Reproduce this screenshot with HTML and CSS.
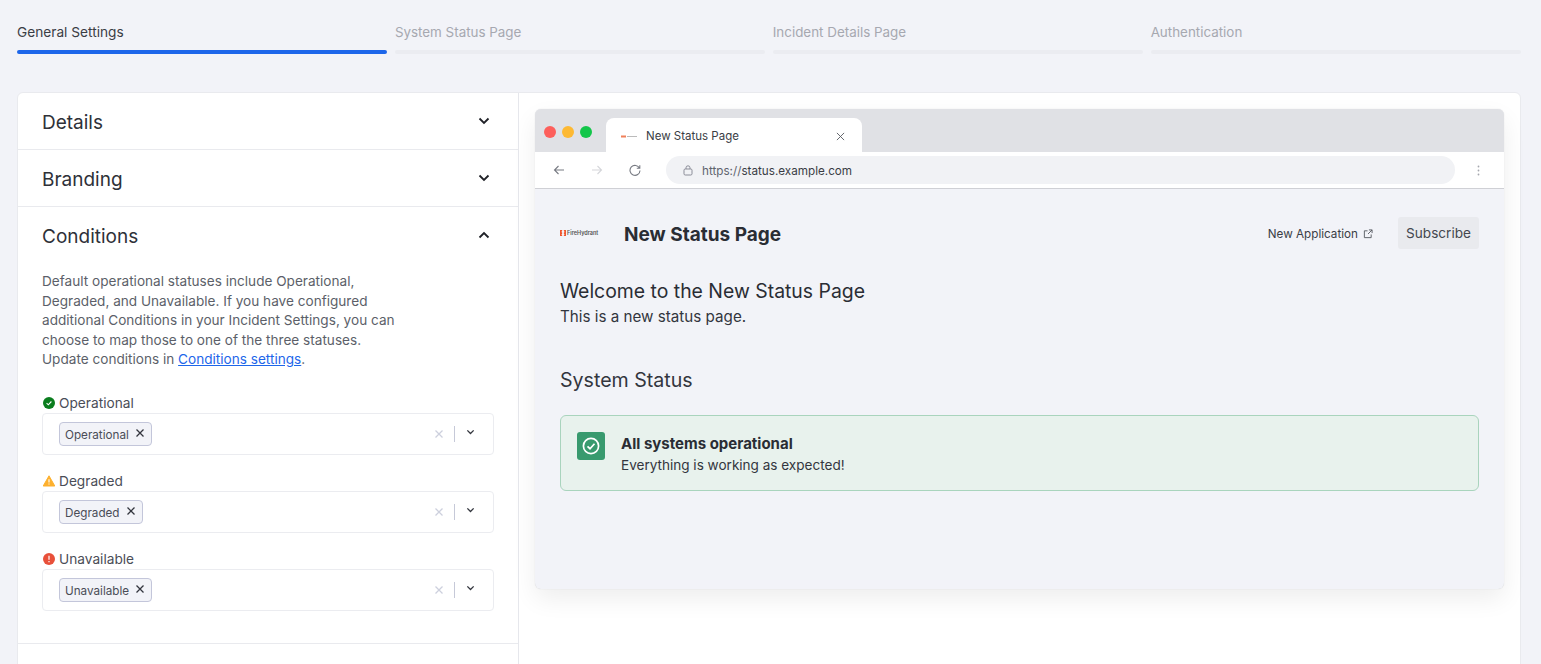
FILE: index.html
```html
<!DOCTYPE html>
<html lang="en">
<head>
<meta charset="utf-8">
<title>New Status Page</title>
<link rel="stylesheet" href="styles.css">
</head>
<body>
<nav class="steps">
  <div class="step active"><span class="step-label">General Settings</span><span class="step-bar"></span></div>
  <div class="step"><span class="step-label">System Status Page</span><span class="step-bar"></span></div>
  <div class="step"><span class="step-label">Incident Details Page</span><span class="step-bar"></span></div>
  <div class="step"><span class="step-label">Authentication</span><span class="step-bar"></span></div>
</nav>
<main class="card">
  <section class="settings">
    <div class="acc-row"><h2>Details</h2><svg class="chev" viewBox="0 0 12 8"><path d="M1.5 1.5 6 6l4.5-4.5"/></svg></div>
    <div class="acc-row"><h2>Branding</h2><svg class="chev" viewBox="0 0 12 8"><path d="M1.5 1.5 6 6l4.5-4.5"/></svg></div>
    <div class="acc-open">
      <div class="acc-head"><h2>Conditions</h2><svg class="chev" viewBox="0 0 12 8"><path d="M1.5 6.5 6 2l4.5 4.5"/></svg></div>
      <p class="intro">Default operational statuses include Operational, Degraded, and Unavailable. If you have configured additional Conditions in your Incident Settings, you can choose to map those to one of the three statuses. Update conditions in <a href="#">Conditions settings</a>.</p>
      <div class="field">
        <label><svg class="status-icon" viewBox="0 0 12 12"><circle cx="6" cy="6" r="6" fill="#0a7d1e"/><path d="M3.6 6.2 5.3 7.8 8.4 4.5" fill="none" stroke="#fff" stroke-width="1.1"/></svg>Operational</label>
        <div class="select"><span class="tag">Operational<svg class="tag-x" viewBox="0 0 10 10"><path d="M1.5 1.5l7 7M8.5 1.5l-7 7"/></svg></span><span class="sel-tools"><svg class="clear" viewBox="0 0 10 10"><path d="M1.5 1.5l7 7M8.5 1.5l-7 7"/></svg><i class="sep"></i><svg class="sel-chev" viewBox="0 0 10 6"><path d="M1.5 1.2 5 4.6l3.500-3.400"/></svg></span></div>
      </div>
      <div class="field">
        <label><svg class="status-icon" viewBox="0 0 12 12"><path d="M6 .8 11.800 11H.2Z" fill="#fdb02e" stroke="#fdb02e" stroke-linejoin="round"/><path d="M6 4.200v3.300M6 8.600v1" stroke="#fff" stroke-width="1.100"/></svg>Degraded</label>
        <div class="select"><span class="tag">Degraded<svg class="tag-x" viewBox="0 0 10 10"><path d="M1.500 1.500l7 7M8.500 1.500l-7 7"/></svg></span><span class="sel-tools"><svg class="clear" viewBox="0 0 10 10"><path d="M1.500 1.500l7 7M8.500 1.500l-7 7"/></svg><i class="sep"></i><svg class="sel-chev" viewBox="0 0 10 6"><path d="M1.500 1.200 5 4.600l3.500-3.400"/></svg></span></div>
      </div>
      <div class="field">
        <label><svg class="status-icon" viewBox="0 0 12 12"><circle cx="6" cy="6" r="6" fill="#e8503a"/><path d="M6 2.800v3.900M6 8v1.200" stroke="#fff" stroke-width="1.200"/></svg>Unavailable</label>
        <div class="select"><span class="tag">Unavailable<svg class="tag-x" viewBox="0 0 10 10"><path d="M1.500 1.500l7 7M8.500 1.500l-7 7"/></svg></span><span class="sel-tools"><svg class="clear" viewBox="0 0 10 10"><path d="M1.500 1.500l7 7M8.500 1.500l-7 7"/></svg><i class="sep"></i><svg class="sel-chev" viewBox="0 0 10 6"><path d="M1.500 1.200 5 4.600l3.500-3.400"/></svg></span></div>
      </div>
    </div>
  </section>
  <section class="preview">
    <div class="browser">
      <div class="tabstrip">
        <span class="lights"><i class="red"></i><i class="amber"></i><i class="green"></i></span>
        <div class="tab">
          <svg class="tab-logo" viewBox="0 0 16 3"><rect width="5" height="2" y=".5" fill="#f0805a"/><rect x="6" width="10" height="1" y="1" fill="#bbb"/></svg>
          <span class="tab-title">New Status Page</span>
          <svg class="tab-x" viewBox="0 0 10 10"><path d="M1 1l8 8M9 1l-8 8"/></svg>
        </div>
      </div>
      <div class="toolbar">
        <svg class="nav-ic" viewBox="0 0 12 12"><path d="M11 6H1.500M5.500 2 1.500 6l4 4"/></svg>
        <svg class="nav-ic off" viewBox="0 0 12 12"><path d="M1 6h9.500M6.500 2l4 4-4 4"/></svg>
        <svg class="nav-ic" viewBox="0 0 12 12"><path d="M10.500 4.200A5 5 0 1 0 11 6.500M10.800 1.300v3h-3"/></svg>
        <div class="urlbar">
          <svg class="lock" viewBox="0 0 10 11"><rect x="1" y="4" width="8" height="6" rx="1.200"/><path d="M3 4V2.800a2 2 0 0 1 4 0V4"/></svg>
          <span class="url"><span class="proto">https://</span>status.example.com</span>
        </div>
        <svg class="kebab" viewBox="0 0 3 11"><circle cx="1.500" cy="1.500" r=".9"/><circle cx="1.500" cy="5.500" r=".9"/><circle cx="1.500" cy="9.500" r=".9"/></svg>
      </div>
      <div class="page">
        <header class="page-head">
          <span class="brand"><svg class="brand-ic" viewBox="0 0 8 8"><path d="M0 0h3.200L2 2.500 3.200 4 2 6l1.200 2H0ZM8 0H4.800L6 2.500 4.800 4 6 6 4.800 8H8Z" fill="#f0562f"/></svg><span class="brand-name">FireHydrant</span></span>
          <h1>New Status Page</h1>
          <a class="app-link" href="#">New Application<svg class="ext" viewBox="0 0 11 11"><path d="M5 2H1.500v7.500H9V6M6.500 1H10v3.500M10 1 5.500 5.500"/></svg></a>
          <span class="subscribe">Subscribe</span>
        </header>
        <h3 class="welcome">Welcome to the New Status Page</h3>
        <p class="lead">This is a new status page.</p>
        <h3 class="sys">System Status</h3>
        <div class="banner">
          <span class="banner-ic"><svg viewBox="0 0 18 18"><circle cx="9" cy="9" r="7.600"/><path d="M5.500 9.300 8 11.700l4.500-5"/></svg></span>
          <div class="banner-text"><strong>All systems operational</strong><span>Everything is working as expected!</span></div>
        </div>
      </div>
    </div>
  </section>
</main>
</body>
</html>
```
FILE: styles.css
```css
* { box-sizing: border-box; }
html, body { height: 100%; }
body {
  margin: 0;
  background: #f2f3f8;
  font-family: "Inter", "Lato", sans-serif;
  color: #2a2d34;
  overflow: hidden;
  padding: 23px 20px 0 17px;
}
svg { display: block; flex: none; }
h1, h2, h3, p { margin: 0; font-weight: 400; }

.steps { display: flex; gap: 7.500px; }
.step { flex: 1; display: flex; flex-direction: column; gap: 9px; }
.step-label { font-size: 13.400px; line-height: 18px; color: #a6a8b0; }
.step-bar { height: 4px; border-radius: 2px; background: #ebecf1; }
.active .step-label { color: #3a3d45; font-size: 13.700px; }
.active .step-bar { background: #1d66ea; }

.card {
  margin-top: 38px;
  display: flex;
  height: 600px;
  background: #fff;
  border: 1px solid #e9eaee;
  border-radius: 6px;
}
.settings { width: 501px; flex: none; border-right: 1px solid #e6e7ec; }
.acc-row, .acc-head { display: flex; align-items: center; justify-content: space-between; padding: 2px 28px 0 24px; }
.acc-row { height: 57px; border-bottom: 1px solid #e9eaee; }
.acc-row .chev { margin-top: -2px; }
.acc-head { height: 56px; }
.acc-head .chev { margin-top: -2px; }
h2 { font-size: 19px; color: #2e3138; }
.chev { width: 12px; height: 8px; fill: none; stroke: #1f2127; stroke-width: 1.800; }
.acc-open { height: 437px; border-bottom: 1px solid #e9eaee; }
.intro { margin: 9px 0 0 24px; width: 358px; font-size: 13.600px; line-height: 19.500px; color: #5c5f69; }
.intro a { color: #1d66ea; text-decoration: underline; }
.field { margin: 0 24px; }
.intro + .field { margin-top: 23px; }
.field + .field { margin-top: 16px; }
label { display: flex; align-items: center; gap: 4px; height: 20px; padding: 1px 0 0 1px; font-size: 13.700px; color: #4a4d57; }
.status-icon { width: 12px; height: 12px; }
.select {
  height: 42px;
  display: flex;
  align-items: center;
  justify-content: space-between;
  border: 1px solid #ebecf0;
  border-radius: 4px;
  padding: 0 18px 0 16px;
}
.tag {
  display: flex;
  align-items: center;
  height: 24px;
  padding: 2px 6px 0 5px;
  gap: 6px;
  font-size: 11.700px;
  color: #4a4d57;
  background: #f2f3f8;
  border: 1px solid #c3c6da;
  border-radius: 4px;
}
.tag-x { width: 10px; height: 10px; fill: none; stroke: #33363e; stroke-width: 1.300; margin-top: -3px; }
.sel-tools { display: flex; align-items: center; }
.clear { width: 10px; height: 10px; fill: none; stroke: #cdd0dd; stroke-width: 1.300; }
.sep { width: 1px; height: 16px; background: #c6c9d8; margin: 0 11px 0 10px; }
.sel-chev { width: 9px; height: 6px; fill: none; stroke: #33363e; stroke-width: 1.500; margin-top: -3px; }

.preview { flex: 1; padding: 16px 16px 0; }
.browser {
  height: 480px;
  display: flex;
  flex-direction: column;
  background: #f2f3f8;
  border-radius: 6px;
  box-shadow: 0 0 1px rgba(0,0,0,.18), 0 10px 24px rgba(0,0,0,.07);
  overflow: hidden;
}
.tabstrip { height: 43px; flex: none; display: flex; align-items: flex-end; background: #e0e1e5; padding-left: 9px; }
.lights { display: flex; gap: 6px; align-self: flex-start; margin-top: 17px; }
.lights i { width: 12px; height: 12px; border-radius: 50%; }
.red { background: #fd5f5b; }
.amber { background: #fdb933; }
.green { background: #13c64a; }
.tab {
  margin-left: 14px;
  width: 256px;
  height: 34px;
  display: flex;
  align-items: center;
  background: #fff;
  border-radius: 8px 8px 0 0;
  padding: 2px 17px 0 15px;
  font-size: 11.500px;
  color: #3a3d45;
}
.tab-logo { width: 16px; height: 3px; margin-right: 9px; }
.tab-title { flex: 1; }
.tab-x { width: 9px; height: 9px; fill: none; stroke: #55585f; stroke-width: 1; }
.toolbar {
  height: 37px;
  flex: none;
  display: flex;
  align-items: center;
  background: #fff;
  border-bottom: 1px solid #cfd0d5;
  padding: 0 24px 0 18px;
}
.nav-ic { width: 12px; height: 12px; fill: none; stroke: #777a82; stroke-width: 1.100; margin-right: 26px; }
.nav-ic.off { stroke: #d5d6da; }
.urlbar {
  flex: 1;
  height: 28px;
  display: flex;
  align-items: center;
  gap: 9px;
  margin: 0 22px 0 -1px;
  padding-left: 17px;
  background: #f1f2f5;
  border-radius: 14px;
  font-size: 11.700px;
  color: #3a3d45;
}
.url { padding-top: 1px; }
.lock { width: 10px; height: 11px; fill: none; stroke: #8b8d98; stroke-width: 1; }
.proto { color: #60636d; }
.kebab { width: 3px; height: 11px; fill: #a5a7ae; }

.page { flex: 1; padding: 28px 25px 0; }
.page-head { display: flex; align-items: center; height: 32px; }
.brand { width: 64px; display: flex; align-items: center; gap: 1px; }
.brand-ic { width: 6px; height: 6px; }
.brand-name { font-size: 5.500px; color: #555; font-weight: 600; }
h1 { font-size: 19px; font-weight: 700; flex: 1; color: #2a2d34; padding-top: 2px; }
.app-link { display: flex; align-items: center; gap: 5px; padding-top: 1px; font-size: 11.700px; color: #3a3d45; text-decoration: none; margin-right: 25px; }
.ext { width: 10px; height: 10px; fill: none; stroke: #55585f; stroke-width: 1; }
.subscribe {
  height: 32px;
  width: 81px;
  display: flex;
  align-items: center;
  justify-content: center;
  background: #e9eaee;
  border-radius: 3px;
  font-size: 13.600px;
  color: #44474f;
}
.welcome { margin-top: 30px; font-size: 19.400px; line-height: 24px; }
.lead { margin-top: 4px; font-size: 15.200px; line-height: 20px; color: #33363e; }
.sys { margin-top: 41px; font-size: 19.600px; line-height: 24px; color: #33363e; }
.banner {
  margin-top: 23px;
  height: 76px;
  display: flex;
  align-items: flex-start;
  gap: 16px;
  padding: 16px;
  background: #e8f2ed;
  border: 1px solid #a9d4bd;
  border-radius: 6px;
}
.banner-ic { width: 28px; height: 28px; background: #389a6e; border-radius: 3px; display: flex; align-items: center; justify-content: center; }
.banner-ic svg { width: 18px; height: 18px; fill: none; stroke: #fff; stroke-width: 1.700; }
.banner-text strong { display: block; font-size: 15px; line-height: 20px; margin-top: 2px; }
.banner-text span { display: block; font-size: 13.550px; line-height: 20px; margin-top: 1px; color: #33363e; }
```
